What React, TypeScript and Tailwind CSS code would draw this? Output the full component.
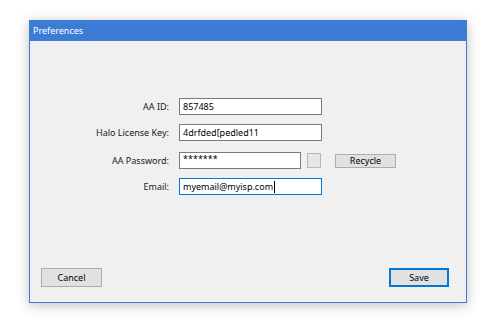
const labelCls = 'w-[141px] text-right text-[9px] text-[#1a1a1a] pr-[2px]';
const inputCls =
  'h-[17px] border border-[#7a7a7a] bg-white px-[3px] text-[9px] leading-[15px] text-black flex items-center';

export default function App() {
  return (
    <div
      className="w-[500px] h-[331px] bg-white pl-[29px] pt-[20px]"
      style={{ fontFamily: '"Noto Sans", "Open Sans", Arial, sans-serif' }}
    >
      <div className="w-[438px] h-[283px] flex flex-col border border-[#3c7bd6] shadow-[0_2px_12px_rgba(0,0,0,0.25)]">
        {/* Title bar */}
        <div className="h-[20px] bg-[#3c7bd6] text-white text-[9px] leading-[20px] pl-[3px] shrink-0">
          Preferences
        </div>

        {/* Body */}
        <div className="flex-1 bg-[#f0f0f0] flex flex-col">
          <div className="flex flex-col pt-[57px]">
            <div className="flex items-center gap-[8px] h-[17px]">
              <div className={labelCls}>AA ID:</div>
              <div className={inputCls + ' w-[143px]'}>857485</div>
            </div>
            <div className="flex items-center gap-[8px] h-[17px] mt-[9px]">
              <div className={labelCls}>Halo License Key:</div>
              <div className={inputCls + ' w-[143px]'}>4drfded[pedled11</div>
            </div>
            <div className="flex items-center gap-[8px] h-[17px] mt-[11px]">
              <div className={labelCls}>AA Password:</div>
              <div className={inputCls + ' w-[122px] text-[7px]'}>
                <span className="-mt-[4px]">*******</span>
              </div>
              <div className="w-[14px] h-[15px] border border-[#b9b9b9] bg-[#e6e6e6] -ml-[2px]" />
              <button className="ml-[6px] w-[61px] h-[14px] border border-[#adadad] bg-[#e1e1e1] text-[9px] leading-[12px] text-black">
                Recycle
              </button>
            </div>
            <div className="flex items-center gap-[8px] h-[17px] mt-[9px]">
              <div className={labelCls}>Email:</div>
              <div className={inputCls + ' w-[143px] border-[#0078d7]'}>
                myemail@myisp.com
                <span className="inline-block w-px h-[12px] bg-black ml-[1px]" />
              </div>
            </div>
          </div>

          <div className="flex-1" />

          <div className="flex justify-between pl-[11px] pr-[17px] pb-[15px]">
            <button className="w-[61px] h-[19px] border border-[#adadad] bg-[#e1e1e1] text-[9px] text-black">
              Cancel
            </button>
            <button className="w-[60px] h-[19px] border-2 border-[#0078d7] bg-[#e1e1e1] text-[9px] text-black">
              Save
            </button>
          </div>
        </div>
      </div>
    </div>
  );
}
